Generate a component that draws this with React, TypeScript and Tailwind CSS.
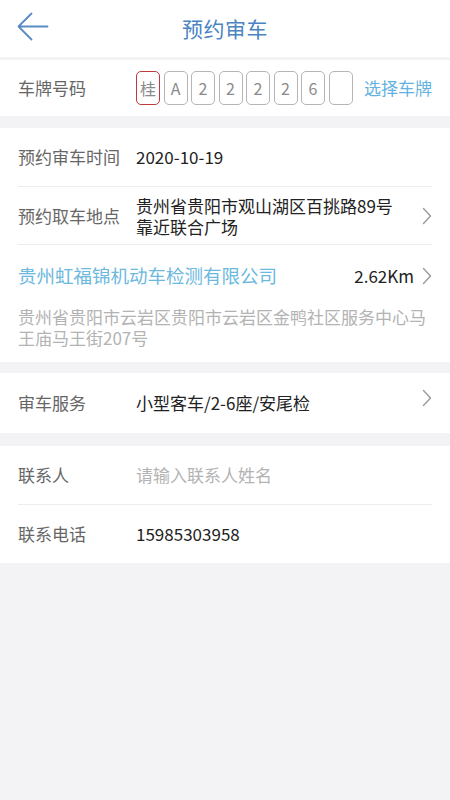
const plate = ["桂", "A", "2", "2", "2", "2", "6", ""];

const Chevron = () => (
  <svg width="10" height="18" viewBox="0 0 10 18" fill="none" className="shrink-0">
    <polyline points="1.5,1.5 8.5,9 1.5,16.5" stroke="#9a9a9a" strokeWidth="1.4" strokeLinecap="round" strokeLinejoin="round" />
  </svg>
);

const App = () => {
  return (
    <div
      className="min-h-[800px] w-[450px] bg-[#f3f3f5] text-[17px]"
      style={{ fontFamily: '"Noto Sans CJK SC", "Noto Sans", sans-serif' }}
    >
      {/* header */}
      <div className="relative flex h-[57px] items-center justify-center bg-white">
        <button className="absolute left-[15px] top-[11px]">
          <svg width="36" height="32" viewBox="0 0 36 32" fill="none">
            <path d="M16.5 2.5L3.5 15.5L16.5 28.5M3.5 15.5H32.5" stroke="#5b8bc4" strokeWidth="1.8" strokeLinecap="round" strokeLinejoin="round" />
          </svg>
        </button>
        <div className="text-[21px] leading-none tracking-[0.5px] text-[#4a84c2]">预约审车</div>
      </div>

      {/* plate row */}
      <div className="mt-[3px] flex h-[56px] items-center bg-white pl-[18px] pr-[18px]">
        <div className="w-[118px] text-[#666]">车牌号码</div>
        <div className="flex gap-[3.5px]">
          {plate.map((c, i) => (
            <div
              key={i}
              className={
                i === 0
                  ? "flex h-[34px] w-[24px] items-center justify-center rounded-[5px] border border-[#c0393b] text-[16px] text-[#8a8a8a]"
                  : "flex h-[34px] w-[24px] items-center justify-center rounded-[5px] border border-[#b5b5b5] text-[16px] text-[#8a8a8a]"
              }
            >
              {c}
            </div>
          ))}
        </div>
        <div className="ml-auto text-[17px] text-[#63b2e0]">选择车牌</div>
      </div>

      {/* appointment info */}
      <div className="mt-[12px] bg-white">
        <div className="mx-[18px] flex h-[59px] items-center border-b border-[#ececec]">
          <div className="w-[118px] text-[#666]">预约审车时间</div>
          <div className="text-[#222]">2020-10-19</div>
        </div>
        <div className="mx-[18px] flex h-[58px] items-center border-b border-[#ececec]">
          <div className="w-[118px] shrink-0 text-[#666]">预约取车地点</div>
          <div className="flex-1 leading-[21px] text-[#222]">
            贵州省贵阳市观山湖区百挑路89号
            <br />
            靠近联合广场
          </div>
          <Chevron />
        </div>
        <div className="mx-[18px] pb-[14px]">
          <div className="flex h-[61px] items-center">
            <div className="flex-1 text-[18.5px] text-[#6cb8de]">贵州虹福锦机动车检测有限公司</div>
            <div className="mr-[8px] text-[#222]">2.62Km</div>
            <Chevron />
          </div>
          <div className="text-[17px] leading-[21px] text-[#b3b3b3]">
            贵州省贵阳市云岩区贵阳市云岩区金鸭社区服务中心马王庙马王街207号
          </div>
        </div>
      </div>

      {/* service */}
      <div className="mt-[11px] bg-white">
        <div className="mx-[18px] flex h-[60px] items-center">
          <div className="w-[118px] text-[#666]">审车服务</div>
          <div className="flex-1 text-[#222]">小型客车/2-6座/安尾检</div>
          <div className="-mt-[10px]">
            <Chevron />
          </div>
        </div>
      </div>

      {/* contact */}
      <div className="mt-[13px] bg-white">
        <div className="mx-[18px] flex h-[59px] items-center border-b border-[#ececec]">
          <div className="w-[118px] text-[#666]">联系人</div>
          <input
            className="flex-1 bg-transparent text-[#222] outline-none placeholder:text-[#b3b3b3]"
            placeholder="请输入联系人姓名"
          />
        </div>
        <div className="mx-[18px] flex h-[58px] items-center">
          <div className="w-[118px] text-[#666]">联系电话</div>
          <div className="text-[#222]">15985303958</div>
        </div>
      </div>
    </div>
  );
};

export default App;
